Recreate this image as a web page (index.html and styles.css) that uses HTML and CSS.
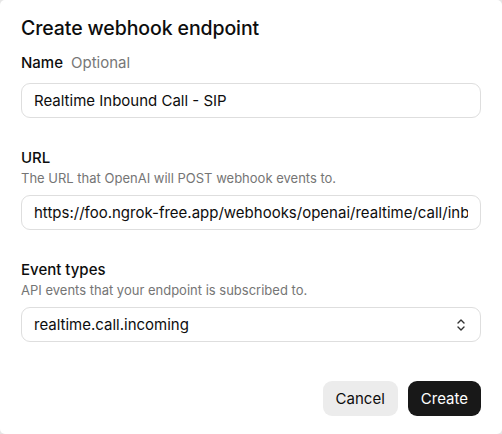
FILE: index.html
```html
<!DOCTYPE html>
<html>
<head>
<meta charset="utf-8">
<link rel="stylesheet" href="styles.css">
</head>
<body>
<div class="modal">
  <h1 class="title">Create webhook endpoint</h1>
  <div class="field">
    <div class="label">Name <span class="optional">Optional</span></div>
    <div class="input">Realtime Inbound Call - SIP</div>
  </div>
  <div class="field">
    <div class="label">URL</div>
    <div class="desc">The URL that OpenAI will POST webhook events to.</div>
    <div class="input"><span class="clip">https://foo.ngrok-free.app/webhooks/openai/realtime/call/inbound</span></div>
  </div>
  <div class="field">
    <div class="label">Event types</div>
    <div class="desc">API events that your endpoint is subscribed to.</div>
    <div class="input select">
      <span>realtime.call.incoming</span>
      <svg class="chev" width="10" height="14" viewBox="0 0 10 14" fill="none" stroke="#333" stroke-width="1.4" stroke-linecap="round" stroke-linejoin="round"><path d="M2 5l3-3 3 3"/><path d="M2 9l3 3 3-3"/></svg>
    </div>
  </div>
  <div class="actions">
    <button class="btn cancel">Cancel</button>
    <button class="btn create">Create</button>
  </div>
</div>
</body>
</html>
```
FILE: styles.css
```css
html, body {
  margin: 0;
  padding: 0;
  background: #e6e6e6;
}
body {
  font-family: Inter, "Liberation Sans", sans-serif;
  color: #0d0d0d;
}
.modal {
  width: 502px;
  height: 434px;
  box-sizing: border-box;
  background: #fff;
  border-radius: 5px;
  padding: 16px 21px 0 21px;
}
.title {
  margin: 0;
  font-size: 19.5px;
  line-height: 24px;
  font-weight: 500;
  letter-spacing: -0.1px;
}
.field:first-of-type {
  margin-top: 13px;
}
.field + .field {
  margin-top: 30px;
}
.label {
  font-size: 15px;
  line-height: 20px;
  font-weight: 500;
}
.optional {
  font-weight: 400;
  color: #777;
  margin-left: 4px;
}
.desc {
  font-size: 13px;
  line-height: 18px;
  color: #757575;
  margin-top: 1px;
}
.input {
  margin-top: 10px;
  height: 35px;
  box-sizing: border-box;
  border: 1px solid #dedede;
  border-radius: 9px;
  padding: 0 12px;
  display: flex;
  align-items: center;
  font-size: 15px;
  color: #0d0d0d;
  overflow: hidden;
  white-space: nowrap;
}
.desc + .input {
  margin-top: 8px;
}
.clip {
  overflow: hidden;
  white-space: nowrap;
}
.select {
  justify-content: space-between;
}
.chev {
  margin-right: 2px;
}
.actions {
  display: flex;
  justify-content: flex-end;
  gap: 10px;
  margin-top: 39px;
}
.btn {
  font-family: Inter, "Liberation Sans", sans-serif;
  font-size: 15px;
  height: 35px;
  border-radius: 9px;
  border: none;
  padding: 0 13px;
}
.cancel {
  background: #ececec;
  color: #0d0d0d;
}
.create {
  background: #181818;
  color: #fff;
}
```
